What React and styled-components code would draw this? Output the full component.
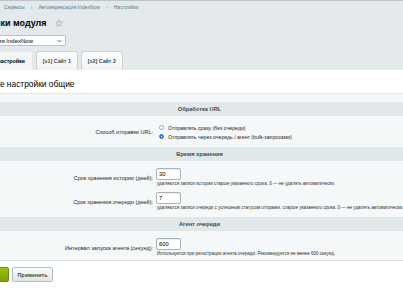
import React from 'react'
import styled, { createGlobalStyle } from 'styled-components'

const GlobalStyle = createGlobalStyle`
  html, body {
    margin: 0;
    padding: 0;
    background: #ffffff;
    overflow: hidden;
  }
  body {
    font-family: "Liberation Sans", Arial, sans-serif;
    color: #000;
  }
`

const Page = styled.div`
  width: 495px;
  margin-left: -48px;
`

const Top = styled.div`
  background: #e4eaec;
  border-top: 1px solid #bcc6ca;
  padding-top: 3px;
`

const Crumbs = styled.div`
  display: flex;
  align-items: center;
  gap: 6px;
  padding-left: 52px;
  font-size: 5px;
  line-height: 6px;
  color: #597988;
`

const Sep = styled.span`
  color: #8a9ca5;
`

const TitleRow = styled.div`
  display: flex;
  align-items: center;
  gap: 8px;
  margin-top: 8px;
  padding-left: 11px;
`

const Title = styled.h1`
  margin: 0;
  font-size: 9px;
  line-height: 10px;
  font-weight: bold;
  color: #000;
`

const Select = styled.div`
  box-sizing: border-box;
  display: flex;
  align-items: center;
  justify-content: space-between;
  width: 112px;
  height: 11px;
  margin: 7px 0 0 2px;
  padding: 0 3px 0 4px;
  background: #fff;
  border: 1px solid #b9c3c7;
  border-radius: 2px;
  font-size: 6px;
  color: #000;
`

const Tabs = styled.div`
  display: flex;
  gap: 3px;
  margin-top: 5px;
  padding-left: 19px;
  height: 19px;
`

const Tab = styled.div`
  box-sizing: border-box;
  display: flex;
  align-items: center;
  padding: 0 ${p => (p.$active ? 7 : 6)}px 0 6px;
  height: 19px;
  font-size: 5.3px;
  font-weight: bold;
  color: ${p => (p.$active ? '#000' : '#3b4a52')};
  background: ${p => (p.$active ? '#f3f6f6' : 'linear-gradient(#fbfcfc, #f1f4f5)')};
  border: 1px solid ${p => (p.$active ? '#e4eaec' : '#cbd4d7')};
  border-bottom: none;
  border-radius: 3px 3px 0 0;
`

const Panel = styled.div`
  background: #f5f8f8;
  border-bottom: 1px solid #d4dcdf;
`

const PanelTitle = styled.div`
  background: #fff;
  border-bottom: 1px solid #e3e8ea;
  height: 24px;
  box-sizing: border-box;
  padding: 9px 0 0 25px;
  font-size: 8.4px;
  line-height: 10px;
  color: #000;
`

const Table = styled.div`
  display: grid;
  grid-template-columns: 201px 1fr;
  margin-top: 8px;
`

const SectionHeading = styled.div`
  grid-column: 1 / -1;
  height: 14px;
  display: flex;
  align-items: center;
  justify-content: center;
  background: #e0e8ea;
  font-size: 5.7px;
  font-weight: bold;
  color: #3d4a52;
`

const Label = styled.div`
  display: flex;
  align-items: center;
  justify-content: flex-end;
  padding: ${p => p.$pad || '0'};
  font-size: 5.5px;
  color: #1d2327;
  white-space: nowrap;
`

const Field = styled.div`
  display: flex;
  flex-direction: column;
  align-items: flex-start;
  padding: ${p => p.$pad || '0'};
  padding-left: 3px;
  white-space: nowrap;
`

const RadioLine = styled.label`
  display: flex;
  align-items: center;
  gap: 4px;
  height: 9px;
  margin-left: 3px;
  font-size: 5.2px;
  color: #1d2327;
`

const Radio = styled.input.attrs({ type: 'radio' })`
  appearance: none;
  box-sizing: border-box;
  width: 5px;
  height: 5px;
  margin: 0;
  border-radius: 50%;
  border: 1px solid #9aa7ad;
  background: #fff;
  &:checked {
    border-color: #2a78d4;
    background: radial-gradient(circle, #ffffff 0 0.6px, #2a78d4 0.9px);
  }
`

const Input = styled.input`
  box-sizing: border-box;
  width: 25px;
  height: 12px;
  margin: 0;
  padding: 0 2px;
  border: 1px solid #a8b3b8;
  border-radius: 2px;
  background: #fff;
  box-shadow: inset 0 1px 1px rgba(0, 0, 0, 0.08);
  font-family: "Liberation Sans", Arial, sans-serif;
  font-size: 5.8px;
  color: #000;
`

const Hint = styled.div`
  margin-left: 1px;
  font-size: 4.5px;
  line-height: 7px;
  color: #2b3236;
`

const Footer = styled.div`
  display: flex;
  gap: 3px;
  padding: 6px 0 0 7px;
`

const Button = styled.button`
  box-sizing: border-box;
  height: 15px;
  width: ${p => p.$w}px;
  padding: 0;
  border-radius: 2px;
  font-family: "Liberation Sans", Arial, sans-serif;
  font-size: 5.4px;
  font-weight: bold;
  color: ${p => (p.$primary ? '#fff' : '#3f4b51')};
  border: 1px solid ${p => (p.$primary ? '#6d9000' : '#b6bfc3')};
  background: ${p => (p.$primary ? 'linear-gradient(#9ac216, #7aa200)' : 'linear-gradient(#fbfcfc, #e0e6e8)')};
  box-shadow: 0 1px 1px rgba(0, 0, 0, 0.12);
`

const Star = () => (
  <svg width="8" height="8" viewBox="0 0 24 24" fill="none" stroke="#9aa6ab" strokeWidth="2" strokeLinejoin="round">
    <polygon points="12,2 15,9 22,9.5 16.5,14 18.5,21.5 12,17.5 5.5,21.5 7.5,14 2,9.5 9,9" />
  </svg>
)

const Chevron = () => (
  <svg width="5" height="4" viewBox="0 0 10 6" fill="none" stroke="#444" strokeWidth="1.6">
    <polyline points="1,1 5,5 9,1" />
  </svg>
)

const InputRow = ({ label, value, hint, pad }) => (
  <>
    <Label $pad={pad}>{label}</Label>
    <Field $pad={pad}>
      <Input defaultValue={value} />
      <Hint>{hint}</Hint>
    </Field>
  </>
)

export default function App() {
  return (
    <Page>
      <GlobalStyle />
      <Top>
        <Crumbs>
          <span>Сервисы</span>
          <Sep>›</Sep>
          <span>Автоиндексация IndexNow</span>
          <Sep>›</Sep>
          <span>Настройки</span>
        </Crumbs>
        <TitleRow>
          <Title>Настройки модуля</Title>
          <Star />
        </TitleRow>
        <Select>
          <span>Автоиндексация IndexNow</span>
          <Chevron />
        </Select>
        <Tabs>
          <Tab $active>Общие настройки</Tab>
          <Tab>[s1] Сайт 1</Tab>
          <Tab>[s2] Сайт 2</Tab>
        </Tabs>
      </Top>
      <Panel>
        <PanelTitle>Общие настройки общие</PanelTitle>
        <Table>
          <SectionHeading>Обработка URL</SectionHeading>
          <Label $pad="7px 0 6px">Способ отправки URL:</Label>
          <Field $pad="7px 0 6px">
            <RadioLine>
              <Radio name="mode" />
              Отправлять сразу (без очереди)
            </RadioLine>
            <RadioLine>
              <Radio name="mode" defaultChecked />
              Отправлять через очередь / агент (bulk-запросами)
            </RadioLine>
          </Field>

          <SectionHeading>Время хранения</SectionHeading>
          <InputRow
            pad="7px 0 2px"
            label="Срок хранения истории (дней):"
            value="30"
            hint="удаляются записи истории старше указанного срока. 0 — не удалять автоматически."
          />
          <InputRow
            pad="3px 0 6px"
            label="Срок хранения очереди (дней):"
            value="7"
            hint="удаляются записи очереди с успешным статусом отправки, старше указанного срока. 0 — не удалять автоматически."
          />

          <SectionHeading>Агент очереди</SectionHeading>
          <InputRow
            pad="7px 0 3px"
            label="Интервал запуска агента (секунд):"
            value="600"
            hint="Используется при регистрации агента очереди. Рекомендуется не менее 600 секунд."
          />
        </Table>
      </Panel>
      <Footer>
        <Button $primary $w={50}>Сохранить</Button>
        <Button $w={41}>Применить</Button>
      </Footer>
    </Page>
  )
}
